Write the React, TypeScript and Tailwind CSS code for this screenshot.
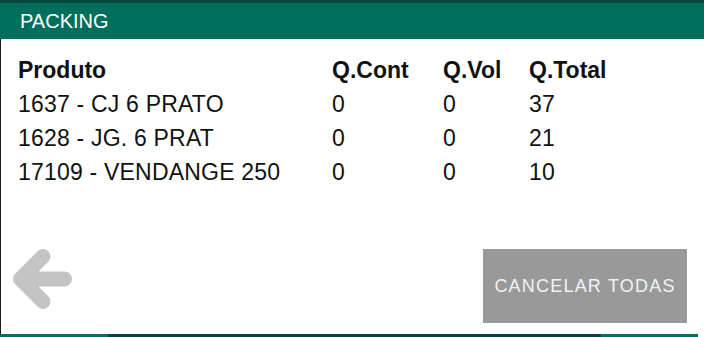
import React from 'react';

const ITEMS = [
    { produto: '1637 - CJ 6 PRATO', cont: 0, vol: 0, total: 37 },
    { produto: '1628 - JG. 6 PRAT', cont: 0, vol: 0, total: 21 },
    { produto: '17109 - VENDANGE 250', cont: 0, vol: 0, total: 10 },
];

const BackArrow: React.FC = () => (
    <svg width="60" height="62" viewBox="0 0 60 62" fill="none">
        <path
            d="M30 7.5 L7.5 30 L30 52.5 M7.5 30 L51.5 30"
            stroke="#c4c4c4"
            strokeWidth="15"
            strokeLinecap="round"
            strokeLinejoin="round"
        />
    </svg>
);

const App: React.FC = () => {
    return (
        <div className="w-[704px] h-[337px] bg-white flex flex-col font-['Liberation_Sans',Arial,sans-serif] overflow-hidden">
            <div className="h-[3px] bg-[#07473a]" />
            <header className="h-[36px] bg-[#006e5c] pl-[20px] flex items-center text-white text-[20px]">
                PACKING
            </header>

            <div className="flex-1 border-l border-[#1a1a1a] flex flex-col">
                {/* Table */}
                <div className="pt-[14px] pl-[17px] text-[23px] leading-[34px] text-[#111]">
                    <div className="grid grid-cols-[314px_111px_86px_1fr] font-bold">
                        <span>Produto</span>
                        <span>Q.Cont</span>
                        <span>Q.Vol</span>
                        <span>Q.Total</span>
                    </div>
                    {ITEMS.map(item => (
                        <div key={item.produto} className="grid grid-cols-[314px_111px_86px_1fr] tracking-[0.2px]">
                            <span>{item.produto}</span>
                            <span>{item.cont}</span>
                            <span>{item.vol}</span>
                            <span>{item.total}</span>
                        </div>
                    ))}
                </div>

                {/* Footer */}
                <div className="mt-auto flex items-start justify-between pl-[12px] pr-[17px] pb-[11px]">
                    <button className="p-0">
                        <BackArrow />
                    </button>
                    <button className="w-[204px] h-[74px] bg-[#999999] text-[#f2f2f2] text-[18px] tracking-[1.2px] flex items-center justify-center">
                        CANCELAR TODAS
                    </button>
                </div>
            </div>

            <div className="h-[3px] flex">
                <div className="w-[108px] bg-[#00725f]" />
                <div className="w-[493px] bg-[#07473a]" />
                <div className="w-[97px] bg-[#00725f]" />
                <div className="flex-1 bg-white" />
            </div>
        </div>
    );
};

export default App;
